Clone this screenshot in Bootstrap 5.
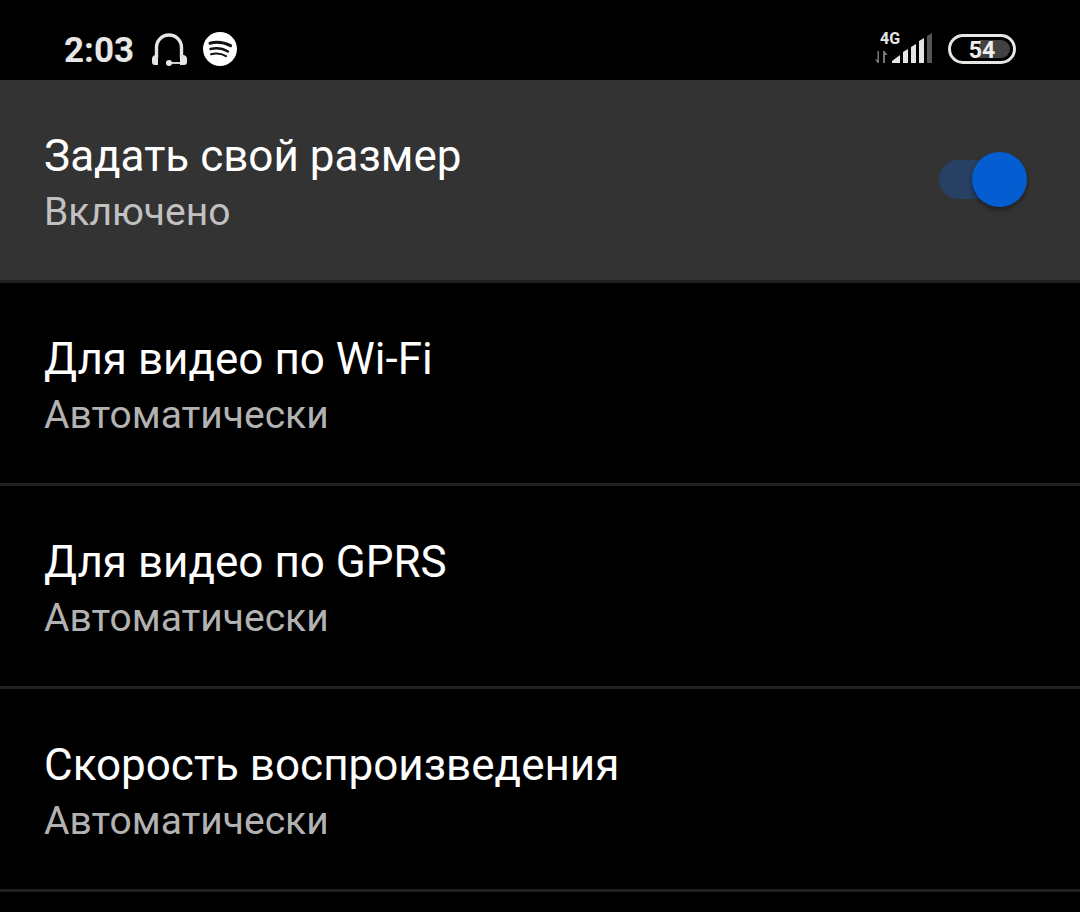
<!DOCTYPE html>
<html lang="ru" data-bs-theme="dark">
<head>
<meta charset="utf-8">
<meta name="viewport" content="width=device-width, initial-scale=1">
<title>Настройки видео</title>
<link href="https://cdn.jsdelivr.net/npm/bootstrap@5.3.0/dist/css/bootstrap.min.css" rel="stylesheet">
<style>
  body { background: #000; font-family: Roboto, "Noto Sans", sans-serif; }
  .status-bar { padding: 18px 64px 0; color: #e6e6e6; }
  .clock { font-size: 35px; line-height: 58px; font-weight: 700; margin-right: 17px; }
  .setting { padding: 48px 52px 40px 44px; border-bottom: 3px solid #212121; color: #fff; text-align: left; }
  .setting-on { background: #333; }
  .setting-title { font-size: 44px; line-height: 56px; }
  .setting-value { font-size: 39px; line-height: 56px; color: #b2b2b2; }
  .setting-on .setting-value { color: #c1c1c1; }
  .switch-box { height: 103px; }
  .form-check-input.toggle { position: relative; width: 85px; height: 39px; margin: 0 4px 0 0; border: 0; border-radius: 20px; background: #274064; }
  .form-check-input.toggle:checked { background: #274064; }
  .toggle::after { content: ""; position: absolute; top: -8px; right: -3px; width: 55px; height: 55px; border-radius: 50%; background: #045dd1; box-shadow: 0 3px 5px rgba(0, 0, 0, .4); }
</style>
</head>
<body>
<header class="status-bar d-flex justify-content-between">
  <div class="d-flex align-items-center">
    <span class="clock pt-1">2:03</span>
    <svg class="me-3" width="36" height="36" viewBox="0 0 36 36" fill="none" stroke="#e6e6e6" aria-hidden="true">
      <path d="M5.500 27V16.500a12.500 12.500 0 0 1 25 0V27" stroke-width="3.400"/>
      <path d="M18 32h13" stroke-width="1.800"/>
      <path d="M7 24v10H4q-3 0-3-3v-3q0-3 3-4zM29 24v10h4q3 0 3-3v-3q0-3-3-4z" fill="#e6e6e6" stroke="none"/>
      <circle cx="18" cy="32" r="3" fill="#e6e6e6" stroke="none"/>
    </svg>
    <svg width="34" height="34" viewBox="0 0 34 34" fill="none" stroke="#111" stroke-linecap="round" aria-hidden="true">
      <circle cx="17" cy="17" r="17" fill="#fff" stroke="none"/>
      <path d="M7 11.200q11-2.500 20.500 2.500" stroke-width="3"/>
      <path d="M7.500 17q9.500-2.300 17.500 2.500" stroke-width="2.400"/>
      <path d="M8 22.200q8.500-1.800 15 2" stroke-width="2"/>
    </svg>
  </div>
  <div class="d-flex align-items-center">
    <svg class="me-3" width="58" height="40" viewBox="0 0 58 40" role="img" aria-label="4G">
      <text x="6" y="15" font-family="Roboto, sans-serif" font-size="16" font-weight="700" fill="#e6e6e6">4G</text>
      <path d="M5 22v12h-1.500L1 30.500h2.500V22zM9 34V22h1.500l3 4h-2.500v8z" fill="#777"/>
      <path d="M18 34v-2l8-6v8zM29 34V23l5-3v14zM37 34V18l5-3v19zM45 34V12l5-3v25z" fill="#e6e6e6"/>
      <path d="M53 34V7l5-3v30z" fill="#555"/>
    </svg>
    <svg width="68" height="30" viewBox="0 0 68 30" role="img" aria-label="54%">
      <path d="M31 6h22a9 9 0 0 1 0 18H31z" fill="#424242"/>
      <rect x="1.500" y="1.500" width="65" height="27" rx="13.500" fill="none" stroke="#e6e6e6" stroke-width="3"/>
      <text x="34" y="24" text-anchor="middle" font-family="Roboto, sans-serif" font-size="23" font-weight="700" fill="#eee">54</text>
    </svg>
  </div>
</header>
<main>
  <div class="setting setting-on d-flex justify-content-between">
    <label for="custom-size">
      <span class="setting-title d-block">Задать свой размер</span>
      <span class="setting-value d-block">Включено</span>
    </label>
    <div class="switch-box d-flex align-items-center">
      <input class="form-check-input toggle" type="checkbox" role="switch" id="custom-size" checked>
    </div>
  </div>
  <button type="button" class="setting btn rounded-0 border-top-0 border-start-0 border-end-0 d-block w-100">
    <span class="setting-title d-block">Для видео по Wi-Fi</span>
    <span class="setting-value d-block">Автоматически</span>
  </button>
  <button type="button" class="setting btn rounded-0 border-top-0 border-start-0 border-end-0 d-block w-100">
    <span class="setting-title d-block">Для видео по GPRS</span>
    <span class="setting-value d-block">Автоматически</span>
  </button>
  <button type="button" class="setting btn rounded-0 border-top-0 border-start-0 border-end-0 d-block w-100">
    <span class="setting-title d-block">Скорость воспроизведения</span>
    <span class="setting-value d-block">Автоматически</span>
  </button>
</main>
<script src="https://cdn.jsdelivr.net/npm/bootstrap@5.3.0/dist/js/bootstrap.bundle.min.js"></script>
</body>
</html>
